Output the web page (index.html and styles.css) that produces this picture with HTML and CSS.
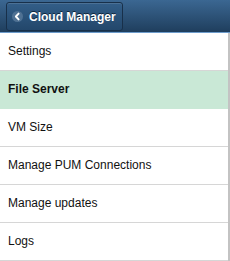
FILE: index.html
```html
<!DOCTYPE html>
<html>
<head>
<meta charset="utf-8">
<link rel="stylesheet" href="styles.css">
</head>
<body>
<div class="panel">
  <header class="topbar">
    <button class="back-btn">
      <span class="back-icon">
        <svg width="11" height="11" viewBox="0 0 11 11"><path d="M6.6 2.6 L3.9 5.5 L6.6 8.4" fill="none" stroke="#fff" stroke-width="1.9" stroke-linecap="round" stroke-linejoin="round"/></svg>
      </span>
      <span class="back-label">Cloud Manager</span>
    </button>
  </header>
  <ul class="menu">
    <li class="menu-item">Settings</li>
    <li class="menu-item active">File Server</li>
    <li class="menu-item">VM Size</li>
    <li class="menu-item">Manage PUM Connections</li>
    <li class="menu-item">Manage updates</li>
    <li class="menu-item">Logs</li>
  </ul>
</div>
</body>
</html>
```

FILE: styles.css
```css
html, body {
  margin: 0;
  padding: 0;
  background: #fff;
}
body {
  font-family: "Liberation Sans", Arial, sans-serif;
  width: 230px;
  height: 261px;
  overflow: hidden;
}
.panel {
  width: 230px;
  display: flex;
  flex-direction: column;
}
.topbar {
  height: 32px;
  background: linear-gradient(#3b6792, #1f3e5d);
  border-bottom: 1px solid #6d9ccc;
  display: flex;
  align-items: center;
  padding-left: 6px;
}
.back-btn {
  box-sizing: border-box;
  height: 29px;
  width: 117px;
  margin-top: 1px;
  border: 1px solid #18304a;
  border-radius: 3px;
  background: linear-gradient(#335e88, #23476b);
  box-shadow: inset 0 1px 0 rgba(255,255,255,0.12);
  display: flex;
  align-items: center;
  padding: 0 0 0 5px;
  gap: 6px;
  font-family: "Liberation Sans", Arial, sans-serif;
  cursor: pointer;
}
.back-icon {
  width: 11px;
  height: 11px;
  border-radius: 50%;
  background: #4f7193;
  display: flex;
}
.back-label {
  color: #fff;
  font-size: 12px;
  font-weight: bold;
  text-shadow: 0 -1px 0 #10253a;
}
.menu {
  list-style: none;
  margin: 0;
  padding: 0;
  width: 228px;
  border-right: 2px solid #c3c3c3;
}
.menu-item {
  height: 37px;
  line-height: 37px;
  padding-left: 8px;
  font-size: 12px;
  color: #111;
  border-bottom: 1px solid #d6d6d6;
}
.menu-item.active {
  background: #c9e8d6;
  font-weight: bold;
  border-bottom-color: #c9e8d6;
}
```
